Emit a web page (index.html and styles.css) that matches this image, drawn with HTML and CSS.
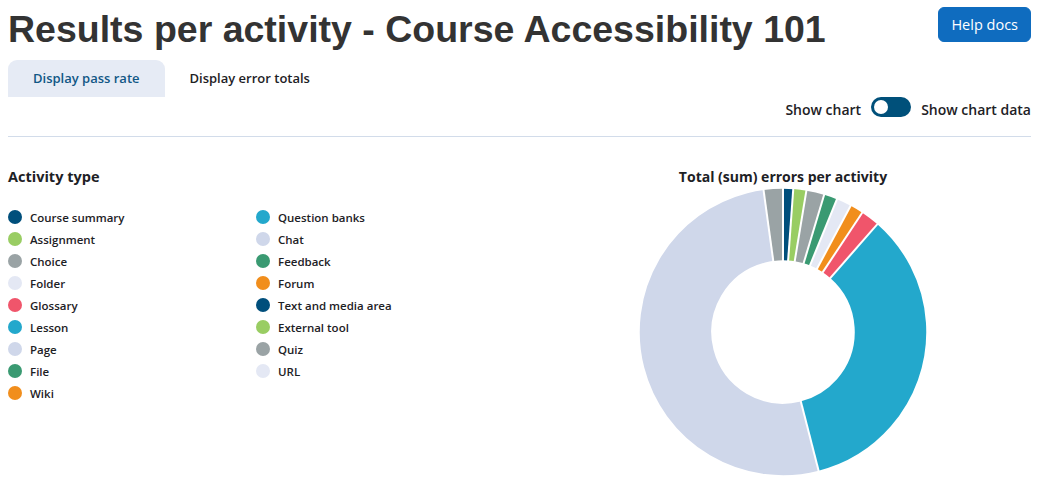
FILE: index.html
```html
<!DOCTYPE html>
<html lang="en">
<head>
<meta charset="utf-8">
<title>Results per activity</title>
<link rel="stylesheet" href="styles.css">
</head>
<body>
<div class="page">
  <header class="header">
    <h1 class="title">Results per activity - Course Accessibility 101</h1>
    <a class="btn-help" href="#">Help docs</a>
  </header>
  <nav class="tabs">
    <a class="tab active" href="#">Display pass rate</a>
    <a class="tab" href="#">Display error totals</a>
  </nav>
  <div class="toggle-row">
    <span class="toggle-label">Show chart</span>
    <span class="switch"><span class="knob"></span></span>
    <span class="toggle-label">Show chart data</span>
  </div>
  <main class="content">
    <section class="legend-col">
      <h3 class="legend-title">Activity type</h3>
      <ul class="legend">
        <li><span class="dot c-navy"></span>Course summary</li>
        <li><span class="dot c-cyan"></span>Question banks</li>
        <li><span class="dot c-green"></span>Assignment</li>
        <li><span class="dot c-pale"></span>Chat</li>
        <li><span class="dot c-grey"></span>Choice</li>
        <li><span class="dot c-teal"></span>Feedback</li>
        <li><span class="dot c-light"></span>Folder</li>
        <li><span class="dot c-orange"></span>Forum</li>
        <li><span class="dot c-red"></span>Glossary</li>
        <li><span class="dot c-navy"></span>Text and media area</li>
        <li><span class="dot c-cyan"></span>Lesson</li>
        <li><span class="dot c-green"></span>External tool</li>
        <li><span class="dot c-pale"></span>Page</li>
        <li><span class="dot c-grey"></span>Quiz</li>
        <li><span class="dot c-teal"></span>File</li>
        <li><span class="dot c-light"></span>URL</li>
        <li><span class="dot c-orange"></span>Wiki</li>
      </ul>
    </section>
    <section class="chart-col">
      <h3 class="chart-title">Total (sum) errors per activity</h3>
      <svg class="donut" width="290" height="290" viewBox="-145 -145 290 290" aria-label="Donut chart">
        <g fill="none" stroke-width="71.5">
          <circle r="107.5" stroke="#004f7c" stroke-dasharray="8.2 700" transform="rotate(-90)"/>
          <circle r="107.5" stroke="#99cd63" stroke-dasharray="10.4 700" transform="rotate(-85.9)"/>
          <circle r="107.5" stroke="#9aa3a5" stroke-dasharray="14.2 700" transform="rotate(-80.6)"/>
          <circle r="107.5" stroke="#3a9a72" stroke-dasharray="10.6 700" transform="rotate(-73.3)"/>
          <circle r="107.5" stroke="#e4e8f4" stroke-dasharray="11.9 700" transform="rotate(-67.9)"/>
          <circle r="107.5" stroke="#f18e1c" stroke-dasharray="10.6 700" transform="rotate(-61.8)"/>
          <circle r="107.5" stroke="#f0556b" stroke-dasharray="14.8 700" transform="rotate(-56.4)"/>
          <circle r="107.5" stroke="#23a8cc" stroke-dasharray="233.9 700" transform="rotate(-48.8)"/>
          <circle r="107.5" stroke="#cfd7ea" stroke-dasharray="350.6 700" transform="rotate(75.6)"/>
          <circle r="107.5" stroke="#9aa3a5" stroke-dasharray="14.8 700" transform="rotate(262.2)"/>
        </g>
        <g stroke="#fff" stroke-width="2">
          <line x1="0" y1="-71" x2="0" y2="-144"/>
          <line x1="0" y1="-71" x2="0" y2="-144" transform="rotate(4.1)"/>
          <line x1="0" y1="-71" x2="0" y2="-144" transform="rotate(9.4)"/>
          <line x1="0" y1="-71" x2="0" y2="-144" transform="rotate(16.7)"/>
          <line x1="0" y1="-71" x2="0" y2="-144" transform="rotate(22.1)"/>
          <line x1="0" y1="-71" x2="0" y2="-144" transform="rotate(28.2)"/>
          <line x1="0" y1="-71" x2="0" y2="-144" transform="rotate(33.6)"/>
          <line x1="0" y1="-71" x2="0" y2="-144" transform="rotate(41.2)"/>
          <line x1="0" y1="-71" x2="0" y2="-144" transform="rotate(165.6)"/>
          <line x1="0" y1="-71" x2="0" y2="-144" transform="rotate(352.2)"/>
        </g>
      </svg>
    </section>
  </main>
</div>
</body>
</html>
```

FILE: styles.css
```css
* { box-sizing: border-box; }
html, body { margin: 0; padding: 0; background: #fff; }
body {
  font-family: "Open Sans", "Noto Sans", "DejaVu Sans", sans-serif;
  color: #1d2125;
}
.page { padding: 0 9px 0 8px; }

.header {
  display: flex;
  justify-content: space-between;
  align-items: flex-start;
  padding-top: 7px;
}
.title {
  margin: 0;
  font-family: "Liberation Sans", Arial, sans-serif;
  font-weight: 700;
  font-size: 37.5px;
  line-height: 45px;
  color: #333;
}
.btn-help {
  display: inline-block;
  background: #0f6cbf;
  color: #fff;
  text-decoration: none;
  font-size: 14.5px;
  line-height: 21px;
  padding: 6px 12px;
  border: 1px solid #0f6cbf;
  border-radius: 6px;
}

.tabs {
  display: flex;
  margin-top: 8px;
}
.tab {
  display: flex;
  align-items: center;
  height: 37px;
  padding: 0 25px 1px;
  font-size: 13px;
  font-weight: 600;
  color: #1d2125;
  text-decoration: none;
}
.tab.active {
  background: #e6ebf5;
  color: #115785;
  border-radius: 9px 9px 0 0;
}

.toggle-row {
  display: flex;
  justify-content: flex-end;
  align-items: flex-start;
  gap: 10px;
  padding: 0 0 16px;
  border-bottom: 1px solid #d2dcea;
}
.toggle-label {
  padding-top: 3px;
  font-size: 14px;
  line-height: 20px;
  font-weight: 600;
  color: #1d2125;
}
.switch {
  display: flex;
  align-items: center;
  width: 40px;
  height: 20px;
  padding: 0 3px;
  border-radius: 10px;
  background: #00507a;
}
.knob {
  width: 14px;
  height: 14px;
  border-radius: 50%;
  background: #fff;
}

.content {
  display: grid;
  grid-template-columns: 1fr 496px;
}
.legend-title {
  margin: 30px 0 0;
  font-size: 14.5px;
  font-weight: 700;
  line-height: 20px;
}
.legend {
  list-style: none;
  margin: 19px 0 0;
  padding: 0;
  display: grid;
  grid-template-columns: 248px 1fr;
  grid-auto-rows: 22px;
}
.legend li {
  display: flex;
  align-items: center;
  gap: 8px;
  font-size: 11.5px;
  font-weight: 600;
}
.dot {
  width: 14px;
  height: 14px;
  border-radius: 50%;
  flex: none;
}
.c-navy { background: #004f7c; }
.c-green { background: #99cd63; }
.c-grey { background: #9aa3a5; }
.c-light { background: #e4e8f4; }
.c-red { background: #f0556b; }
.c-cyan { background: #23a8cc; }
.c-pale { background: #cfd7ea; }
.c-teal { background: #3a9a72; }
.c-orange { background: #f18e1c; }

.chart-col {
  display: flex;
  flex-direction: column;
  align-items: center;
}
.chart-title {
  margin: 30px 0 0;
  font-size: 14px;
  font-weight: 700;
  line-height: 20px;
}
.donut { display: block; margin-top: 0; }
```
